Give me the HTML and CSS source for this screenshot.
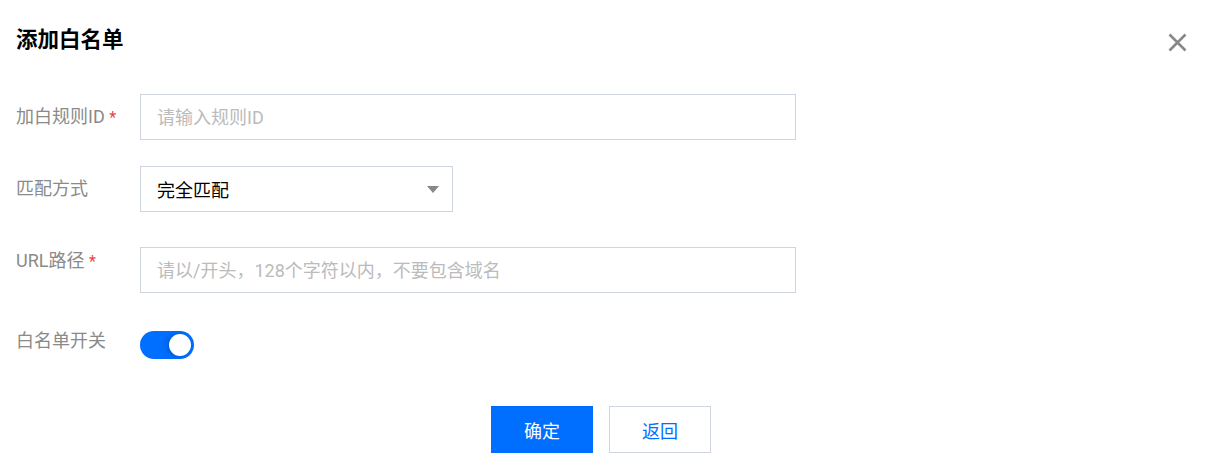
FILE: index.html
```html
<!DOCTYPE html>
<html lang="zh-CN">
<head>
  <meta charset="UTF-8" />
  <meta name="viewport" content="width=device-width, initial-scale=1" />
  <title>添加白名单</title>
  <link rel="stylesheet" href="styles.css">
</head>
<body>

  <div class="dialog">
    <div class="dialog-head">
      <div class="dialog-title">添加白名单</div>
      <button class="dialog-close" type="button" aria-label="关闭">
        <svg width="19" height="19" viewBox="0 0 19 19">
          <path d="M1.5 1.5 L17.5 17.5 M17.5 1.5 L1.5 17.5" stroke="#888" stroke-width="2.6" fill="none" />
        </svg>
      </button>
    </div>

    <form class="form">
      <div class="form-row row-id">
        <label class="form-label">加白规则ID <span class="req">*</span></label>
        <input class="form-input" type="text" placeholder="请输入规则ID" />
      </div>

      <div class="form-row row-match">
        <label class="form-label">匹配方式</label>
        <div class="form-select">
          <span>完全匹配</span>
          <i class="caret"></i>
        </div>
      </div>

      <div class="form-row row-url">
        <label class="form-label label-top">URL路径 <span class="req">*</span></label>
        <input class="form-input" type="text" placeholder="请以/开头，128个字符以内，不要包含域名" />
      </div>

      <div class="form-row row-switch">
        <label class="form-label label-switch">白名单开关</label>
        <span class="switch is-on"><i class="switch-knob"></i></span>
      </div>
    </form>

    <div class="dialog-foot">
      <button class="btn btn-primary" type="button">确定</button>
      <button class="btn" type="button">返回</button>
    </div>
  </div>

</body>
</html>
```

FILE: styles.css
```css
body {
  margin: 0;
  background: #fff;
  font-family: Roboto, "Noto Sans CJK SC", sans-serif;
  color: #000;
}

.dialog {
  padding: 26px 32px 0 16px;
}

.dialog-head {
  display: flex;
  justify-content: space-between;
  align-items: flex-start;
}

.dialog-title {
  font-size: 21.5px;
  font-weight: bold;
  line-height: 28px;
}

.dialog-close {
  border: none;
  background: transparent;
  padding: 0;
  margin-top: 7px;
  width: 19px;
  height: 19px;
  cursor: pointer;
}

.form {
  margin-top: 40px;
  font-size: 18px;
}

.form-row {
  display: flex;
  align-items: flex-start;
}

.row-match { margin-top: 26px; }
.row-url { margin-top: 35px; }
.row-switch { margin-top: 38px; }

.form-label {
  width: 124px;
  height: 46px;
  flex: none;
  color: #8a8a8a;
  line-height: 46px;
  white-space: nowrap;
}

.label-top {
  line-height: 20px;
  padding-top: 4px;
  box-sizing: border-box;
}

.label-switch {
  line-height: 20px;
  height: 28px;
}

.req {
  color: #e54545;
  font-size: 16px;
}

.form-input {
  box-sizing: border-box;
  width: 656px;
  height: 46px;
  border: 1px solid #cfd5de;
  border-radius: 0;
  padding: 0 16px;
  font-family: inherit;
  font-size: 18px;
  color: #000;
  outline: none;
}

.form-input::placeholder {
  color: #bbb;
}

.form-select {
  box-sizing: border-box;
  width: 313px;
  height: 46px;
  border: 1px solid #cfd5de;
  padding: 0 13px 0 16px;
  display: flex;
  align-items: center;
  justify-content: space-between;
}

.caret {
  width: 0;
  height: 0;
  border-left: 6.5px solid transparent;
  border-right: 6.5px solid transparent;
  border-top: 7px solid #888;
}

.switch {
  box-sizing: border-box;
  width: 54px;
  height: 28px;
  border-radius: 14px;
  background: #006eff;
  display: flex;
  align-items: center;
  justify-content: flex-end;
  padding-right: 3px;
}

.switch-knob {
  width: 22px;
  height: 22px;
  border-radius: 50%;
  background: #fff;
  box-shadow: -2px 0 4px rgba(0, 40, 120, 0.35);
}

.dialog-foot {
  display: flex;
  justify-content: center;
  gap: 16px;
  margin-top: 47px;
  padding-right: 1px;
}

.btn {
  box-sizing: border-box;
  width: 102px;
  height: 47px;
  border: 1px solid #cfd5de;
  background: #fff;
  color: #006eff;
  font-family: inherit;
  font-size: 18px;
  cursor: pointer;
}

.btn-primary {
  background: #006eff;
  border-color: #006eff;
  color: #fff;
}
```
